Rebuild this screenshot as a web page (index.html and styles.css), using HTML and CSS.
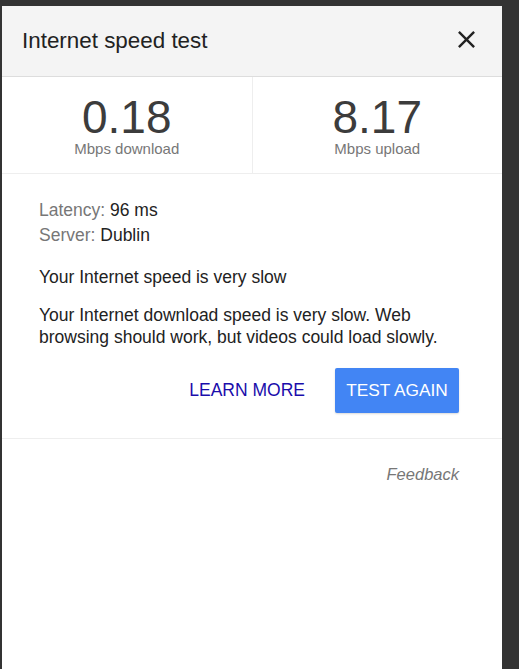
FILE: index.html
```html
<!DOCTYPE html>
<html>
<head>
  <meta name="viewport" content="width=device-width, initial-scale=1">
  <title>Internet speed test</title>
  <link rel="stylesheet" href="styles.css">
</head>
<body>
  <div id="panel">
    <div id="header">
      <div id="title">Internet speed test</div>
      <svg id="close" width="29" height="29" viewBox="0 0 24 24">
        <path d="M19 6.41 17.59 5 12 10.59 6.41 5 5 6.41 10.59 12 5 17.59 6.41 19 12 13.41 17.59 19 19 17.59 13.41 12z" fill="#222"/>
      </svg>
    </div>
    <div id="stats">
      <div class="stat">
        <div class="number">0.18</div>
        <div class="label">Mbps download</div>
      </div>
      <div class="stat">
        <div class="number">8.17</div>
        <div class="label">Mbps upload</div>
      </div>
    </div>
    <div id="details">
      <div class="info"><span class="key">Latency:</span> 96 ms</div>
      <div class="info"><span class="key">Server:</span> Dublin</div>
      <div id="verdict">Your Internet speed is very slow</div>
      <div id="more">Your Internet download speed is very slow. Web browsing should work, but videos could load slowly.</div>
      <div id="actions">
        <a id="learn-more" href="#">LEARN MORE</a>
        <button id="test-again">TEST AGAIN</button>
      </div>
    </div>
    <div id="footer">
      <a id="feedback" href="#">Feedback</a>
    </div>
  </div>
</body>
</html>
```

FILE: styles.css
```css
html, body {
  background-color: #333;
  font-family: "Liberation Sans", Arial, sans-serif;
  margin: 0;
  height: 100%;
  overflow: hidden;
}

#panel {
  background-color: white;
  width: 500px;
  margin: 6px 0 0 2px;
  height: 663px;
}

#header {
  background-color: #f4f4f4;
  height: 70px;
  border-bottom: 1px solid #ddd;
  display: flex;
  align-items: center;
  justify-content: space-between;
  padding: 0 21px 0 20px;
}

#title {
  font-size: 22.4px;
  color: #222;
}

#close {
  margin-top: -3px;
}

#stats {
  display: flex;
  height: 96px;
  border-bottom: 1px solid #eee;
}

.stat {
  flex: 1;
  text-align: center;
  padding-top: 16px;
  box-sizing: border-box;
}

.stat:first-child {
  border-right: 1px solid #eee;
}

.number {
  font-size: 46px;
  line-height: 48px;
  color: #3c3c3c;
}

.label {
  font-size: 15px;
  line-height: 15px;
  color: #777;
}

#details {
  padding: 24px 43px 25px 37px;
  border-bottom: 1px solid #eee;
  font-size: 17.5px;
  color: #222;
}

.info {
  line-height: 25px;
}

.key {
  color: #777;
}

#verdict {
  line-height: 22px;
  margin-top: 18px;
}

#more {
  line-height: 22px;
  margin-top: 16px;
}

#actions {
  display: flex;
  justify-content: flex-end;
  align-items: center;
  gap: 30px;
  margin-top: 20px;
}

#learn-more {
  color: #1a0dab;
  font-size: 17.5px;
  text-decoration: none;
}

#test-again {
  background-color: #4285f4;
  color: white;
  font-family: "Liberation Sans", Arial, sans-serif;
  font-size: 17.3px;
  height: 45px;
  width: 124px;
  border: none;
  border-radius: 2px;
  box-shadow: 0 1px 2px rgba(0, 0, 0, 0.15);
}

#footer {
  padding: 25px 43px 0 0;
  text-align: right;
}

#feedback {
  font-size: 16.5px;
  line-height: 20px;
  font-style: italic;
  color: #777;
  text-decoration: none;
}
```
